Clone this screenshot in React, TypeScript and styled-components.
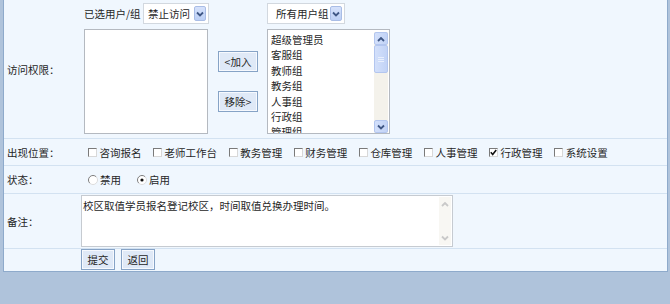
import React from "react";
import styled, { createGlobalStyle } from "styled-components";

const GlobalStyle = createGlobalStyle`
  html, body {
    margin: 0;
    padding: 0;
    background: #afc3db;
  }
  body {
    font-family: "Noto Sans CJK SC", "Noto Sans", sans-serif;
    font-size: 10.5px;
    color: #262626;
  }
`;

const userGroups = ["超级管理员", "客服组", "教师组", "教务组", "人事组", "行政组", "管理组"];
const places = [
    { text: "咨询报名", checked: false },
    { text: "老师工作台", checked: false },
    { text: "教务管理", checked: false },
    { text: "财务管理", checked: false },
    { text: "仓库管理", checked: false },
    { text: "人事管理", checked: false },
    { text: "行政管理", checked: true },
    { text: "系统设置", checked: false },
];

const Chevron = ({ up, color = "#3f5785" }: { up?: boolean; color?: string }) => (
    <svg width="8" height="6" viewBox="0 0 8 6">
        <path
            d={up ? "M1 5 L4 2 L7 5" : "M1 1.5 L4 4.5 L7 1.5"}
            fill="none"
            stroke={color}
            strokeWidth="1.8"
        />
    </svg>
);

const Radio = ({ checked }: { checked?: boolean }) => (
    <svg width="10" height="10" viewBox="0 0 10 10">
        <circle cx="5" cy="5" r="4.5" fill="#fff" />
        <path d="M1.8 8.2 A4.5 4.5 0 0 1 8.2 1.8" fill="none" stroke="#7d7d7d" strokeWidth="1" />
        <path d="M8.2 1.8 A4.5 4.5 0 0 1 1.8 8.2" fill="none" stroke="#dcdcdc" strokeWidth="1" />
        {checked && <circle cx="5" cy="5" r="1.6" fill="#111" />}
    </svg>
);

const App = () => {
    return (
        <Page>
            <GlobalStyle />
            <Panel>
                <Row $h={139}>
                    <Label>访问权限：</Label>
                    <Cell $pad="3px 0 0 4px" $top>
                        <PickCol $w={125}>
                            <PickHead>
                                <span>已选用户/组</span>
                                <Select $w={66} $pad={4}>
                                    <span>禁止访问</span>
                                    <SelectBtn><Chevron /></SelectBtn>
                                </Select>
                            </PickHead>
                            <ListBox $w={124} />
                        </PickCol>
                        <MoveCol>
                            <SmallBtn $w={40}>&lt;加入</SmallBtn>
                            <SmallBtn $w={40}>移除&gt;</SmallBtn>
                        </MoveCol>
                        <PickCol $w={123}>
                            <PickHead>
                                <Select $w={78} $pad={8}>
                                    <span>所有用户组</span>
                                    <SelectBtn><Chevron /></SelectBtn>
                                </Select>
                            </PickHead>
                            <ListBox $w={123}>
                                <ListItems>
                                    {userGroups.map((g) => <li key={g}>{g}</li>)}
                                </ListItems>
                                <ScrollBar>
                                    <ScrollBtn><Chevron up /></ScrollBtn>
                                    <ScrollThumb><i /><i /><i /></ScrollThumb>
                                    <ScrollTrack />
                                    <ScrollBtn><Chevron /></ScrollBtn>
                                </ScrollBar>
                            </ListBox>
                        </PickCol>
                    </Cell>
                </Row>
                <Row $h={27}>
                    <Label>出现位置：</Label>
                    <Cell $pad="0 0 0 8px">
                        {places.map((p) => (
                            <CheckItem key={p.text}>
                                <CheckBox>
                                    {p.checked && (
                                        <svg width="7" height="7" viewBox="0 0 7 7">
                                            <path d="M0.8 3.2 L2.7 5.4 L6.2 0.9" fill="none" stroke="#111" strokeWidth="1.6" />
                                        </svg>
                                    )}
                                </CheckBox>
                                {p.text}
                            </CheckItem>
                        ))}
                    </Cell>
                </Row>
                <Row $h={28}>
                    <Label>状态：</Label>
                    <Cell $pad="0 0 0 8px">
                        <RadioItem><Radio />禁用</RadioItem>
                        <RadioItem><Radio checked />启用</RadioItem>
                    </Cell>
                </Row>
                <Row $h={55}>
                    <Label>备注：</Label>
                    <Cell $pad="1px 0 0 1px" $top>
                        <MemoBox>
                            <MemoText>校区取值学员报名登记校区，时间取值兑换办理时间。</MemoText>
                            <MemoScroll>
                                <Chevron up color="#c9c9c9" />
                                <Chevron color="#c9c9c9" />
                            </MemoScroll>
                        </MemoBox>
                    </Cell>
                </Row>
                <Row $h={22} $last>
                    <Label />
                    <Cell $pad="0 0 0 1px" $top $gap={6}>
                        <SmallBtn $w={34}>提交</SmallBtn>
                        <SmallBtn $w={34}>返回</SmallBtn>
                    </Cell>
                </Row>
            </Panel>
        </Page>
    );
};

export default App;

const Page = styled.div`
    width: 670px;
    height: 304px;
    box-sizing: border-box;
    padding: 0 2px 0 3px;
`;

const Panel = styled.div`
    border: 1px solid #8eaacb;
    border-top: none;
    background: #f0f7fe;
`;

const Row = styled.div<{ $h: number; $last?: boolean }>`
    display: flex;
    height: ${(p) => p.$h}px;
    box-sizing: border-box;
    border-bottom: ${(p) => (p.$last ? "none" : "1px solid #d3e2f1")};
`;

const Label = styled.div`
    width: 76px;
    flex-shrink: 0;
    padding-left: 3px;
    box-sizing: border-box;
    display: flex;
    align-items: center;
`;

const Cell = styled.div<{ $pad: string; $top?: boolean; $gap?: number }>`
    flex: 1;
    display: flex;
    align-items: ${(p) => (p.$top ? "flex-start" : "center")};
    padding: ${(p) => p.$pad};
    gap: ${(p) => p.$gap || 0}px;
`;

const PickCol = styled.div<{ $w: number }>`
    width: ${(p) => p.$w}px;
    display: flex;
    flex-direction: column;
    gap: 5px;
`;

const PickHead = styled.div`
    height: 21px;
    display: flex;
    align-items: center;
    justify-content: space-between;
`;

const Select = styled.div<{ $w: number; $pad: number }>`
    width: ${(p) => p.$w}px;
    height: 21px;
    box-sizing: border-box;
    border: 1px solid #d2d8df;
    background: #fff;
    display: flex;
    align-items: center;
    padding-left: ${(p) => p.$pad}px;
    padding-right: 2px;
    > span {
        white-space: nowrap;
    }
`;

const SelectBtn = styled.div`
    margin-left: auto;
    flex-shrink: 0;
    width: 12px;
    height: 15px;
    box-sizing: border-box;
    border: 1px solid #a9bde6;
    border-radius: 2px;
    background: linear-gradient(#d6e2fb, #bccff5);
    display: flex;
    align-items: center;
    justify-content: center;
`;

const ListBox = styled.div<{ $w: number }>`
    width: ${(p) => p.$w}px;
    height: 105px;
    box-sizing: border-box;
    border: 1px solid #b4b9c0;
    background: #fff;
    display: flex;
    overflow: hidden;
`;

const ListItems = styled.ul`
    flex: 1;
    list-style: none;
    margin: 0;
    padding: 2px 0 0 3px;
    li {
        height: 15.4px;
        line-height: 15.4px;
        white-space: nowrap;
    }
`;

const ScrollBar = styled.div`
    width: 14px;
    margin: 2px 1px 0 0;
    display: flex;
    flex-direction: column;
    background: #f4f2eb;
`;

const ScrollBtn = styled.div`
    height: 13px;
    box-sizing: border-box;
    border: 1px solid #b3c6ef;
    border-radius: 2px;
    background: linear-gradient(90deg, #d3e0fb, #c2d3f6);
    display: flex;
    align-items: center;
    justify-content: center;
`;

const ScrollThumb = styled.div`
    height: 28px;
    box-sizing: border-box;
    border: 1px solid #b3c6ef;
    border-radius: 2px;
    background: linear-gradient(90deg, #d3e0fb, #c2d3f6);
    display: flex;
    flex-direction: column;
    align-items: center;
    justify-content: center;
    gap: 1px;
    i {
        display: block;
        width: 6px;
        height: 1px;
        background: #e9f0fd;
    }
`;

const ScrollTrack = styled.div`
    flex: 1;
`;

const MoveCol = styled.div`
    width: 40px;
    margin: 48px 9px 0;
    display: flex;
    flex-direction: column;
    gap: 19px;
`;

const SmallBtn = styled.div<{ $w: number }>`
    width: ${(p) => p.$w}px;
    height: 21px;
    box-sizing: border-box;
    border: 1px solid #86a3c6;
    box-shadow: inset 0 0 0 1px #f6f9fe;
    background: #dfe9f7;
    display: flex;
    align-items: center;
    justify-content: center;
    white-space: nowrap;
`;

const CheckItem = styled.label`
    display: inline-flex;
    align-items: center;
    margin-right: 11.6px;
    white-space: nowrap;
`;

const CheckBox = styled.span`
    width: 9px;
    height: 9px;
    box-sizing: border-box;
    margin-right: 2.5px;
    border-top: 1px solid #7a7a7a;
    border-left: 1px solid #7a7a7a;
    border-right: 1px solid #d8d8d8;
    border-bottom: 1px solid #d8d8d8;
    background: #fff;
    display: inline-flex;
    align-items: center;
    justify-content: center;
`;

const RadioItem = styled.label`
    display: inline-flex;
    align-items: center;
    gap: 2px;
    margin-right: 16px;
    white-space: nowrap;
`;

const MemoBox = styled.div`
    width: 372px;
    height: 52px;
    box-sizing: border-box;
    border: 1px solid #c6cbd1;
    background: #fff;
    display: flex;
`;

const MemoText = styled.div`
    flex: 1;
    padding: 2px 0 0 1px;
`;

const MemoScroll = styled.div`
    width: 12px;
    margin: 1px 1px 1px 0;
    background: #f8f7f3;
    display: flex;
    flex-direction: column;
    align-items: center;
    justify-content: space-between;
    padding: 4px 0;
    box-sizing: border-box;
`;
